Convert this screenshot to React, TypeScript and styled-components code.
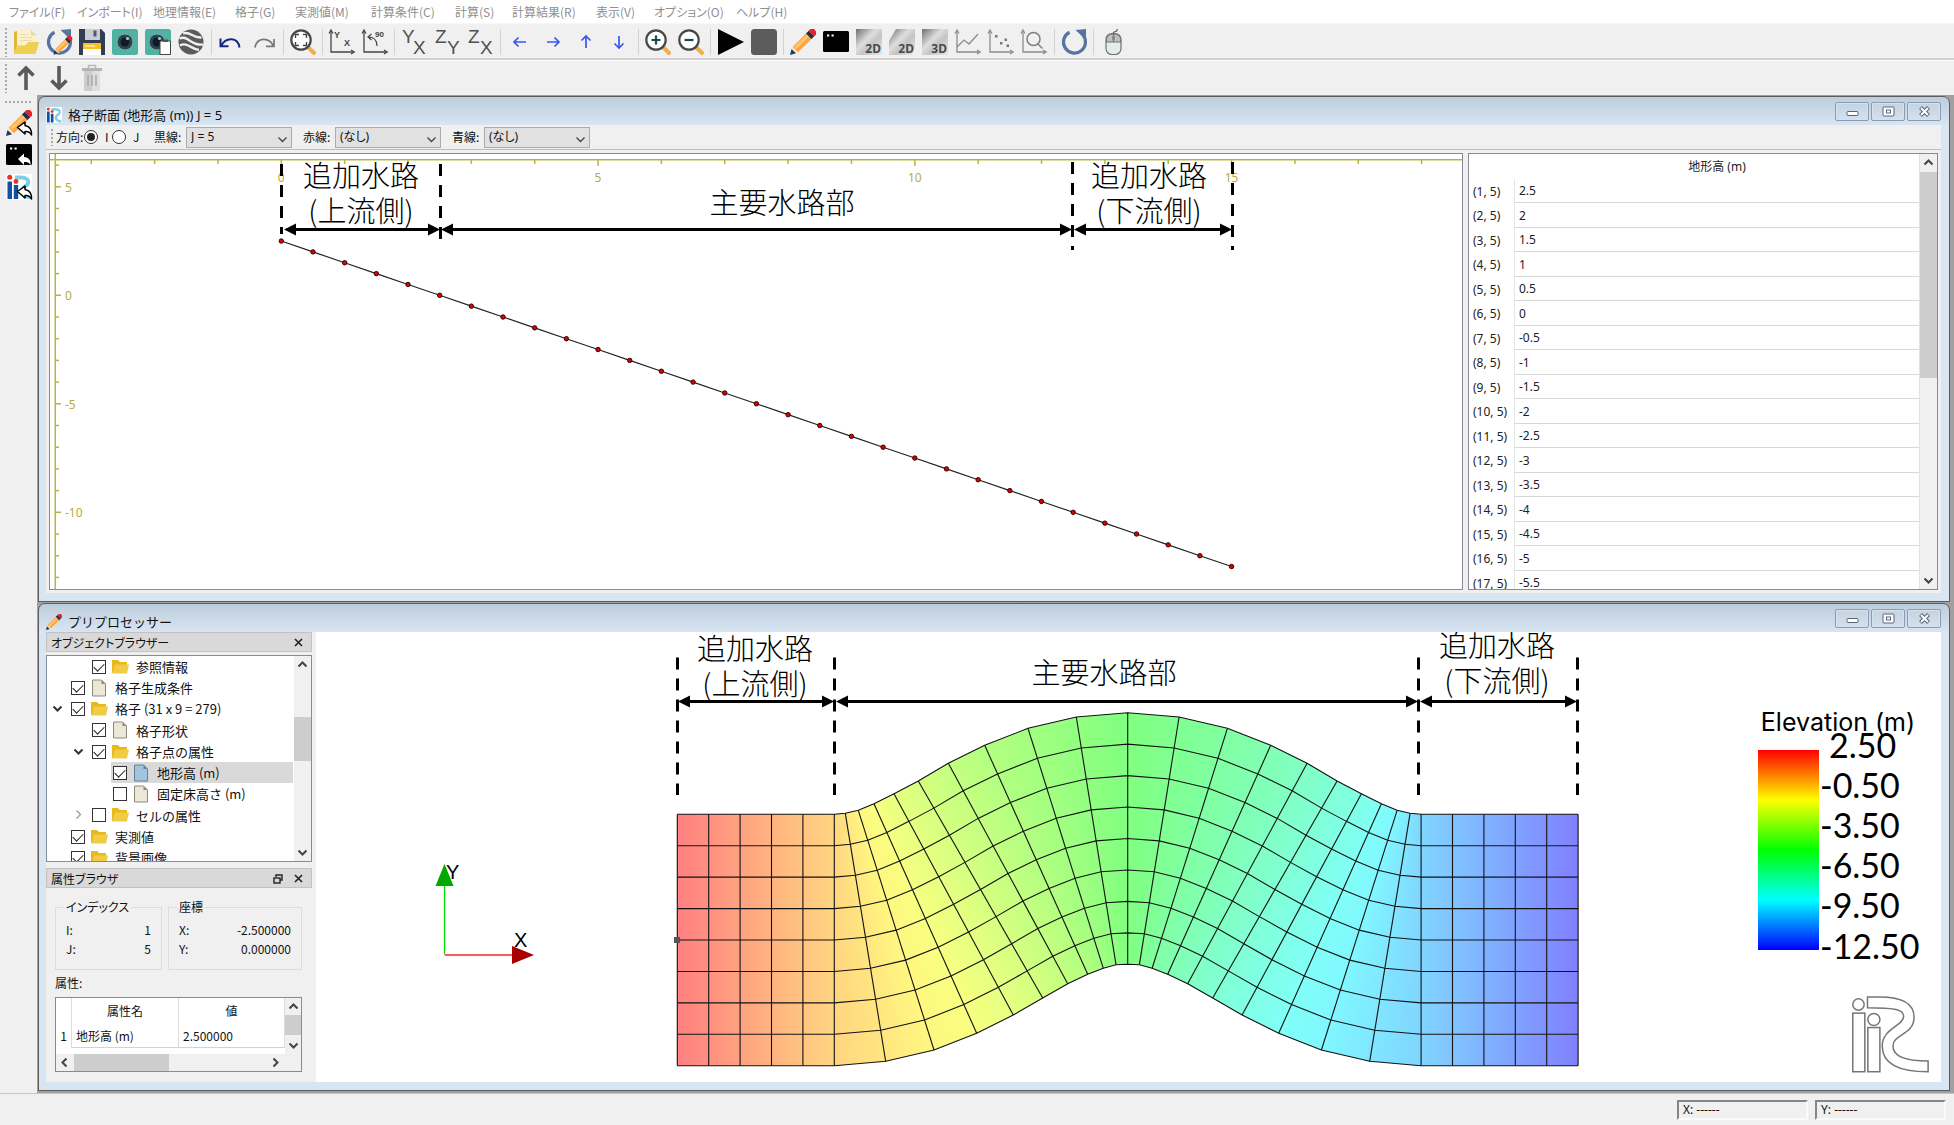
import React, { useState } from "react";
import styled, { createGlobalStyle, css } from "styled-components";

const UI = `"Noto Sans", "Noto Sans CJK JP", sans-serif`;
const JP = `"Noto Sans CJK JP", sans-serif`;

const GlobalStyle = createGlobalStyle`
  * { box-sizing: border-box; }
  html, body { margin: 0; padding: 0; }
  body { background: #f0f0f0; color: #111; font: 12px/18px ${UI}; font-feature-settings: "palt"; }
  button, input, select { font: inherit; font-feature-settings: inherit; color: inherit; margin: 0; }
  button { border: 0; padding: 0; background: none; }
  svg { display: block; overflow: visible; }
`;

const Shell = styled.div`
  height: 100vh;
  display: flex;
  flex-direction: column;
  overflow: hidden;
`;

/* ---------- menu and tool bars ---------- */

const MenuBar = styled.nav`
  height: 24px;
  flex: none;
  display: grid;
  grid-template-columns: 68px 76px 82px 60px 76px 84px 57px 84px 58px 82px auto;
  justify-content: start;
  justify-items: start;
  align-items: center;
  padding-left: 9px;
  background: #fff;
  border-bottom: 1px solid #f7f7f7;
`;

const MenuItem = styled.button`
  color: #8f8f8f;
  line-height: 24px;
  font-family: ${JP};
  white-space: nowrap;
`;

const ToolBar = styled.div<{ $ruled?: boolean }>`
  flex: none;
  display: flex;
  align-items: center;
  gap: 5px;
  padding-left: 4px;
  height: ${(p) => (p.$ruled ? 37 : 34)}px;
  background: #f0f0f0;
  ${(p) =>
    p.$ruled &&
    css`
      border-bottom: 1px solid #fff;
      box-shadow: inset 0 -2px 0 #d0d0d0;
      padding-top: 1px;
      padding-bottom: 1px;
    `}
`;

const Grip = styled.span<{ $wide?: boolean; $short?: boolean }>`
  flex: none;
  width: ${(p) => (p.$wide ? 29 : 4)}px;
  height: ${(p) => (p.$wide ? 4 : p.$short ? 18 : 30)}px;
  background: radial-gradient(circle at 2px 2px, #a8a8a8 1px, transparent 1px) 0 0 / 4px 4px;
`;

const ToolRow = styled.div`
  width: 1113px;
  display: flex;
  align-items: center;
  justify-content: space-between;
`;

const ToolGroup = styled.div`
  display: flex;
  gap: 7px;
`;

const ToolButton = styled.button`
  width: 26px;
  height: 26px;
  flex: none;
`;

const Divider = styled.span`
  width: 1px;
  height: 26px;
  margin: 0 -1px;
  background: #d2d2d2;
`;

const Body = styled.div`
  flex: 1;
  min-height: 0;
  display: flex;
`;

const SideBar = styled.aside`
  width: 37px;
  flex: none;
  display: flex;
  flex-direction: column;
  align-items: center;
  gap: 6px;
  padding-top: 5px;
`;

/* ---------- sub windows ---------- */

const Workspace = styled.main`
  flex: 1;
  min-width: 0;
  display: grid;
  grid-template-rows: minmax(0, 506fr) minmax(0, 488fr);
  gap: 1px;
  padding: 1px 4px 2px 1px;
  background: #a0a0a0;
`;

const SubWindow = styled.section`
  min-width: 0;
  display: flex;
  flex-direction: column;
  padding: 0 8px 8px 7px;
  border: 1px solid #5c5c5c;
  border-radius: 7px 7px 0 0;
  background: linear-gradient(#becddb, #d8e5f2 28px);
`;

const TitleBar = styled.header`
  height: 28px;
  flex: none;
  display: flex;
  align-items: center;
  gap: 6px;
  padding-top: 7px;
`;

const Title = styled.h2`
  flex: 1;
  margin: 0;
  font: 400 13px/20px ${UI};
`;

const CaptionButtons = styled.div`
  display: flex;
  align-self: flex-start;
  gap: 2px;
  margin-top: -2px;
`;

const CaptionButton = styled.button`
  width: 34px;
  height: 19px;
  display: grid;
  place-items: center;
  border: 1px solid #8c9ab5;
  border-radius: 2px;
  background: linear-gradient(#c5d3e1, #d3e0ed);
  box-shadow: inset 0 0 0 1px #d6e2ee;
`;

const Client = styled.div`
  flex: 1;
  min-height: 0;
  display: flex;
  flex-direction: column;
  background: #f0f0f0;
`;

const OptionBar = styled.div`
  height: 25px;
  flex: none;
  display: flex;
  align-items: center;
  padding-left: 4px;
  border-bottom: 1px solid #bdbdbd;
  font-family: ${JP};
`;

const OptionLabel = styled.label<{ $lead?: boolean }>`
  width: ${(p) => (p.$lead ? 28 : 32)}px;
  margin-left: ${(p) => (p.$lead ? 2 : 11)}px;
  white-space: nowrap;
`;

const RadioSet = styled.div`
  display: flex;
  padding-right: 3px;
`;

const RadioLabel = styled.label`
  display: flex;
  align-items: center;
  gap: 7px;
  width: 28px;
`;

const Radio = styled.input`
  appearance: none;
  flex: none;
  width: 14px;
  height: 14px;
  display: grid;
  place-items: center;
  border: 1px solid #333;
  border-radius: 50%;
  background: #fff;
  &:checked::after {
    content: "";
    width: 8px;
    height: 8px;
    border-radius: 50%;
    background: #222;
  }
`;

const SelectBox = styled.div`
  position: relative;
  width: 106px;
  svg {
    position: absolute;
    right: 5px;
    top: 8px;
    pointer-events: none;
  }
`;

const Select = styled.select`
  appearance: none;
  display: block;
  width: 100%;
  height: 21px;
  padding: 0 4px;
  border: 1px solid #adadad;
  border-radius: 0;
  background: #e1e1e1;
  font-family: ${UI};
`;

const Splitter = styled.div`
  flex: 1;
  min-height: 0;
  display: grid;
  grid-template-columns: minmax(0, 1fr) 470px;
  gap: 5px;
  padding: 3px;
`;

const Sunken = styled.div`
  display: flex;
  min-width: 0;
  min-height: 0;
  overflow: hidden;
  border: 1px solid #868b95;
  background: #fff;
`;

const Drawing = styled.svg`
  width: 100%;
  height: 100%;
  overflow: hidden;
`;

/* ---------- scroll bars ---------- */

const Track = styled.div<{ $horizontal?: boolean }>`
  flex: none;
  display: flex;
  flex-direction: ${(p) => (p.$horizontal ? "row" : "column")};
  ${(p) => (p.$horizontal ? "height: 17px; padding-right: 17px;" : "width: 17px;")}
  background: #f0f0f0;
`;

const TrackButton = styled.button`
  flex: none;
  width: 17px;
  height: 17px;
  display: grid;
  place-items: center;
`;

const TrackRun = styled.div<{ $before: number; $horizontal?: boolean }>`
  flex: 1;
  display: flex;
  flex-direction: ${(p) => (p.$horizontal ? "row" : "column")};
  ${(p) => (p.$horizontal ? "padding-left" : "padding-top")}: ${(p) => p.$before}px;
`;

const Thumb = styled.div<{ $size: number; $horizontal?: boolean }>`
  ${(p) => (p.$horizontal ? "width" : "height")}: ${(p) => p.$size}px;
  background: #cdcdcd;
`;

/* ---------- section table ---------- */

const TablePane = styled.div`
  flex: 1;
  min-width: 0;
  overflow: hidden;
  border-right: 1px solid #e2e2e2;
`;

const SectionTable = styled.table`
  width: 100%;
  border-collapse: separate;
  border-spacing: 0;
  color: #222;
  th, td { padding: 1px 0 0; font-weight: 400; text-align: left; }
  thead th { height: 25px; text-align: center; font-size: 12px; }
  tbody th { width: 46px; padding-left: 4px; border-right: 1px solid #e6e6e6; }
  tbody td { padding-left: 4px; border-bottom: 1px solid #d9d9d9; }
  tbody tr { height: 24px; }
  tbody tr:nth-child(even) { height: 25px; }
`;

/* ---------- docks ---------- */

const PreBody = styled.div`
  flex: 1;
  min-height: 0;
  display: grid;
  grid-template-columns: 266px minmax(0, 1fr);
  gap: 4px;
  background: #f0f0f0;
`;

const Docks = styled.div`
  display: flex;
  flex-direction: column;
  min-height: 0;
`;

const DockTitle = styled.div`
  height: 20px;
  flex: none;
  display: flex;
  align-items: center;
  gap: 11px;
  padding: 1px 8px 0 4px;
  border: 1px solid #c2c2c2;
  background: #d9d9d9;
  font-family: ${JP};
  span { flex: 1; }
`;

const TreeFrame = styled(Sunken)`
  flex: 1;
  margin: 3px 0 6px;
`;

const Tree = styled.ul`
  flex: 1;
  margin: 0;
  padding: 0 1px 0 0;
  list-style: none;
  overflow: hidden;
  font: 13px/21px ${JP};
`;

const TreeRow = styled.li<{ $level: number }>`
  height: 21px;
  display: flex;
  padding-left: ${(p) => p.$level * 21 - 17}px;
  white-space: nowrap;
  &:nth-child(4n) { height: 22px; }
`;

const Expander = styled.button`
  width: 12px;
  height: 21px;
  margin-right: 6px;
  flex: none;
  display: grid;
  place-items: center;
`;

const TreeCell = styled.label<{ $selected?: boolean }>`
  flex: 1;
  display: flex;
  align-items: center;
  padding-left: 2px;
  background: ${(p) => (p.$selected ? "#d9d9d9" : "transparent")};
  svg { margin: 0 7px 0 6px; flex: none; }
`;

const Check = styled.input`
  appearance: none;
  flex: none;
  width: 14px;
  height: 14px;
  border: 1px solid #333;
  background: #fff;
  &:checked::after {
    content: "";
    display: block;
    width: 9px;
    height: 5px;
    margin: 2px 0 0 1px;
    border: solid #222;
    border-width: 0 0 1px 1px;
    transform: rotate(-45deg);
  }
`;

const Properties = styled.div`
  flex: none;
  padding: 10px 10px 10px 9px;
  font-family: ${JP};
`;

const GroupRow = styled.div`
  display: grid;
  grid-template-columns: 107px 134px;
  gap: 6px;
`;

const Group = styled.fieldset`
  margin: 0;
  min-width: 0;
  padding: 4px 10px 11px;
  border: 1px solid #dcdcdc;
`;

const Legend = styled.legend`
  margin-left: -2px;
  padding: 0 2px;
  line-height: 18px;
`;

const Readout = styled.div`
  display: flex;
  justify-content: space-between;
  line-height: 19px;
`;

const Caption = styled.div`
  margin: 4px 0 5px;
  line-height: 18px;
`;

const PropFrame = styled(Sunken)`
  height: 75px;
  flex-direction: column;
`;

const PropTop = styled.div`
  flex: 1;
  min-height: 0;
  display: flex;
`;

const PropTable = styled.table`
  width: 229px;
  align-self: flex-start;
  border-collapse: separate;
  border-spacing: 0;
  table-layout: fixed;
  th, td { padding: 0; font-weight: 400; border-right: 1px solid #dcdcdc; }
  thead th { height: 26px; text-align: center; }
  tbody tr { height: 24px; }
  tbody th { text-align: center; }
  tbody td { padding-left: 4px; border-bottom: 1px solid #d2d2d2; }
`;

const Col = styled.col<{ $w: number }>`
  width: ${(p) => p.$w}px;
`;

const View = styled.div`
  background: #fff;
  min-width: 0;
  min-height: 0;
`;

/* ---------- status bar ---------- */

const StatusBar = styled.footer`
  height: 32px;
  flex: none;
  display: flex;
  align-items: center;
  justify-content: flex-end;
  gap: 7px;
  padding-right: 8px;
  border-top: 1px solid #c6c6c6;
`;

const StatusField = styled.output`
  width: 131px;
  height: 20px;
  padding-left: 4px;
  border: 2px solid;
  border-color: #868686 #fafafa #fafafa #868686;
  line-height: 16px;
`;

/* ---------- icons ---------- */

const Icon = ({ children, size = 26 }: { children: React.ReactNode; size?: number }) => (
  <svg width={size} height={size} viewBox="0 0 26 26" fill="none">
    {children}
  </svg>
);

const PencilShape = () => (
  <>
    <path d="M0 26l1.500-6L6 24.300z" fill="#1f3a5c" />
    <path d="M1.800 19l4.700 5L8 22.500 3.300 17.500z" fill="#fde3bd" />
    <path d="M2.800 17.700L16.500 4l5.500 5.500L8 23.200z" fill="#ffa63f" />
    <path d="M4.500 17.500L17.500 5l2 2L6.500 20z" fill="#ffc46e" />
    <path d="M16 4.500l2.700-2.700 5.500 5.500-2.700 2.700z" fill="#1b2f4f" />
    <path d="M18.500 2L20.500 0h3.500l2 2.200v3.300L24 7.500z" fill="#e0232e" />
  </>
);

const ReplyShape = () => (
  <path
    d="M11.500 17.500l7.500-5.500v3.500c4.500 1 7 4.500 6.500 9.500-1.500-3-3.500-4-6.500-3.500v2.500z"
    fill="#fff"
    stroke="#000"
    strokeWidth="1.500"
    strokeLinejoin="round"
  />
);

const RefreshShape = () => (
  <>
    <path d="M8.500 3.200A11 11 0 1 0 21.500 5.500" stroke="#56749f" strokeWidth="3.200" />
    <path d="M14.500 1L25 0v11z" fill="#56749f" />
  </>
);

const IricShape = () => (
  <>
    <rect width="26" height="26" fill="#fff" />
    <path d="M9 3.500h6c5 0 8 2 7 6-1 3-6 3.500-6 7.500 0 4 4 6 9 6.500" stroke="#7fd0e6" strokeWidth="4" />
    <path d="M1.500 7.500h4.500V25H1.500zM7.800 11h4.400v14H7.800z" fill="#1450a0" />
    <circle cx="3.700" cy="3.200" r="2.500" fill="#f0301e" />
    <circle cx="10" cy="7.500" r="2.400" fill="#f0301e" />
  </>
);

const ConsoleShape = () => (
  <>
    <rect x="0" y="2" width="26" height="21" rx="1.500" fill="#000" />
    <path d="M4 5.500h2.200v2H4zM8.500 5.500h2.200v2H8.500z" fill="#fff" />
  </>
);

const Axes = ({ color = "#444" }: { color?: string }) => (
  <>
    <path d="M2 1.500V23h22" stroke={color} strokeWidth="1.300" />
    <path d="M0 4.500L2 1l2 3.500M22 21l3.300 2L22 25" stroke={color} strokeWidth="1.200" />
  </>
);

const Lens = ({ children }: { children: React.ReactNode }) => (
  <>
    <path d="M18 18l6 6" stroke="#f2ad4e" strokeWidth="4" strokeLinecap="round" />
    <circle cx="11" cy="11" r="9.700" fill="#fff" stroke="#474747" strokeWidth="2.200" />
    {children}
  </>
);

const Glyph = ({ x, y, children }: { x: number; y: number; children: string }) => (
  <text x={x} y={y} fontFamily="Liberation Sans, sans-serif" fontSize="19" fill="#505050">
    {children}
  </text>
);

const Dim = ({ label, d }: { label: string; d: string }) => (
  <>
    <defs>
      <linearGradient id="metal" x1="0" y1="0" x2="1" y2="1">
        <stop offset="0" stopColor="#6e6e6e" />
        <stop offset=".4" stopColor="#dedede" />
        <stop offset=".6" stopColor="#c4c4c4" />
        <stop offset="1" stopColor="#e8e8e8" />
      </linearGradient>
    </defs>
    <path d={d} fill="url(#metal)" />
    <text x="25" y="24" textAnchor="end" fontFamily="Noto Sans, sans-serif" fontWeight="700" fontSize="12" fill="#4a4a4a">
      {label}
    </text>
  </>
);

const CameraShape = ({ x = 13 }: { x?: number }) => (
  <>
    <rect width="26" height="26" rx="2.500" fill="#4fb3a3" />
    <circle cx={x} cy="13" r="8" fill="#2c4450" stroke="#7fa9ab" strokeWidth="1" />
    <circle cx={x} cy="13" r="4.500" fill="#0f1c26" />
    <circle cx={x + 2.500} cy="9.500" r="1.600" fill="#a8c6cf" />
  </>
);

const Arrow = ({ turn, color = "#3a56f0" }: { turn: number; color?: string }) => (
  <g transform={`rotate(${turn} 13 13)`}>
    <path d="M19 13H7.500M11.500 8.500L7 13l4.500 4.500" stroke={color} strokeWidth="1.700" />
  </g>
);

const tools: Record<string, React.ReactNode> = {
  open: (
    <>
      <path d="M3.500 1H18l5.500 5.500V20h-20z" fill="#fbf1cd" />
      <path d="M18 1v5.500h5.500z" fill="#e8d9a4" />
      <path d="M7 5.500h8M7 8.500h12M7 11.500h12" stroke="#eadcae" />
      <path d="M1 25V3l3-1v15z" fill="#e0b63a" />
      <path d="M1 25L4 16.500h8L15.500 13H26l-3.500 12z" fill="#f0d050" />
    </>
  ),
  reload: (
    <>
      <RefreshShape />
      <g transform="translate(7.500 7) scale(.72)">
        <PencilShape />
      </g>
    </>
  ),
  save: (
    <>
      <path d="M0 0h22l4 4v22H0z" fill="#323d55" />
      <path d="M6 0h15v11H6z" fill="#c9cdd3" />
      <path d="M14.500 1.500h3v6h-3z" fill="#4e586c" />
      <path d="M4 14h18v12H4z" fill="#fff" />
      <path d="M4 14h18v6H4z" fill="#f8c01c" />
      <path d="M6 17h10" stroke="#fff" />
    </>
  ),
  snapshot: <CameraShape />,
  copySnapshot: (
    <>
      <CameraShape x={12} />
      <path d="M15 12h10.500v13.500H15z" fill="#fff" stroke="#444" />
      <path d="M18 10.500h5v2.500h-5z" fill="#555" />
    </>
  ),
  earth: (
    <>
      <circle cx="13" cy="13" r="12.500" fill="#5b5b5b" />
      <path d="M5 4.500c7-3 10 5 18.500 4M1.500 9.500c8-4 12 8 23.500 6M2 16.500c7-4 12 4 19 4.500" stroke="#f0f0f0" strokeWidth="2.400" />
    </>
  ),
  undo: (
    <path d="M21.500 18.500C20 8 8 7.500 3 17M2.500 9.500V17.300h8" stroke="#14277f" strokeWidth="2" />
  ),
  redo: (
    <path d="M4 18.500C6 8 18 8 22.500 17M23 10v7.300h-8" stroke="#777" strokeWidth="1.700" />
  ),
  fit: (
    <Lens>
      <path d="M5.500 9V5.500H9M13 5.500h3.500V9M16.500 13v3.500H13M9 16.500H5.500V13" stroke="#444" strokeWidth="1.400" />
    </Lens>
  ),
  axes: (
    <>
      <Axes />
      <text x="5" y="9" fontFamily="Liberation Sans, sans-serif" fontWeight="700" fontSize="9" fill="#444">Y</text>
      <text x="15" y="17" fontFamily="Liberation Sans, sans-serif" fontWeight="700" fontSize="9" fill="#444">X</text>
    </>
  ),
  rotate: (
    <>
      <Axes />
      <path d="M6 8c6 0 9 3 9 9M9.500 5L6 8l3.500 3" stroke="#444" strokeWidth="1.200" />
      <text x="13" y="8" fontFamily="Liberation Sans, sans-serif" fontWeight="700" fontSize="8" fill="#444">90</text>
    </>
  ),
  yx: (<><Glyph x={1} y={14}>Y</Glyph><Glyph x={12} y={25}>X</Glyph></>),
  zy: (<><Glyph x={0} y={14}>Z</Glyph><Glyph x={12} y={25}>Y</Glyph></>),
  zx: (<><Glyph x={0} y={14}>Z</Glyph><Glyph x={12} y={25}>X</Glyph></>),
  left: <Arrow turn={0} />,
  right: <Arrow turn={180} />,
  up: <Arrow turn={90} />,
  down: <Arrow turn={270} />,
  zoomIn: (<Lens><path d="M6.500 11h9M11 6.500v9" stroke="#174a4e" strokeWidth="2.200" /></Lens>),
  zoomOut: (<Lens><path d="M6.500 11h9" stroke="#174a4e" strokeWidth="2.200" /></Lens>),
  play: <path d="M0 0l26 13L0 26z" fill="#000" />,
  stop: <rect width="26" height="26" rx="3.500" fill="#5c5c5c" />,
  pencil: <PencilShape />,
  console: <ConsoleShape />,
  plan: <Dim label="2D" d="M0 0h26v26H0z" />,
  bird: <Dim label="2D" d="M7 0h19v20l-3 6H0V12z" />,
  cube: <Dim label="3D" d="M0 0h26v26H0z" />,
  chart: (<><Axes color="#8c8c8c" /><path d="M2 18l7-7 5 4 9-10" stroke="#8c8c8c" strokeWidth="1.300" /></>),
  scatter: (
    <>
      <Axes color="#8c8c8c" />
      <path d="M7 6h2.500v2.500H7zM12 13h2.500v2.500H12zM16.500 9.500H19V12h-2.500zM18.500 15.500H21V18h-2.500z" fill="#777" />
    </>
  ),
  inspect: (
    <>
      <Axes color="#8c8c8c" />
      <circle cx="12.500" cy="10" r="6.500" stroke="#808080" strokeWidth="1.500" />
      <path d="M17 15l4.500 4.500" stroke="#808080" strokeWidth="1.500" />
    </>
  ),
  refresh: <RefreshShape />,
  mouse: (
    <>
      <path d="M13 5c0-4 5-1 4-5" stroke="#555" strokeWidth="1.200" />
      <rect x="6" y="4.500" width="15" height="21" rx="6" fill="#e4ecee" stroke="#707070" strokeWidth="1.200" />
      <path d="M6.500 13v-2.500c0-3 3-5.500 7-5.500s7 2.500 7 5.500V13z" fill="#c0c0c0" stroke="#707070" />
      <path d="M13.500 5v8" stroke="#707070" />
      <rect x="12" y="6.500" width="3" height="5" rx="1.500" fill="#888" />
    </>
  ),
  moveUp: <path d="M13 25V3M5.500 10.500L13 3l7.500 7.500" stroke="#5a5a5a" strokeWidth="3.600" />,
  moveDown: <path d="M13 1v22M5.500 15.500L13 23l7.500-7.500" stroke="#5a5a5a" strokeWidth="3.600" />,
  trash: (
    <>
      <path d="M9.500 3V.5h7V3" stroke="#b9b9b9" strokeWidth="1.500" />
      <path d="M3 3h20v3H3z" fill="#b4b4b4" />
      <path d="M5 6h8v20H5z" fill="#cdcdcd" />
      <path d="M13 6h8v20h-8z" fill="#dedede" />
      <path d="M9 10v11M13 10v11M17 10v11" stroke="#a9a9a9" strokeWidth="1.500" />
    </>
  ),
  sidePencil: (<><PencilShape /><ReplyShape /></>),
  sideConsole: (
    <>
      <ConsoleShape />
      <path d="M12 17l6-5.500v3.500c5 .5 7 3.500 6.500 8-1.500-2.500-3-3-6.500-3v3z" fill="#fff" />
    </>
  ),
  sideIric: (<><IricShape /><ReplyShape /></>),
};

const mainTools: [string, string][][] = [
  [["open", "開く"], ["reload", "再読込"], ["save", "保存"], ["snapshot", "スナップショット"], ["copySnapshot", "コピー"], ["earth", "Google Earth"]],
  [["undo", "元に戻す"], ["redo", "やり直し"]],
  [["fit", "全体表示"]],
  [["axes", "回転リセット"], ["rotate", "90度回転"]],
  [["yx", "XY平面"], ["zy", "YZ平面"], ["zx", "XZ平面"]],
  [["left", "左"], ["right", "右"], ["up", "上"], ["down", "下"]],
  [["zoomIn", "拡大"], ["zoomOut", "縮小"]],
  [["play", "実行"], ["stop", "停止"]],
  [["pencil", "プリプロセッサー"], ["console", "コンソール"], ["plan", "2D"], ["bird", "鳥瞰図"], ["cube", "3D"], ["chart", "グラフ"], ["scatter", "散布図"], ["inspect", "検証"]],
  [["refresh", "更新"]],
  [["mouse", "マウス"]],
];

const Tool = ({ name, label }: { name: string; label: string }) => (
  <ToolButton type="button" aria-label={label}>
    <Icon>{tools[name]}</Icon>
  </ToolButton>
);

const Chevron = ({ dir = "down", color = "#444", w = 2 }: { dir?: "down" | "up" | "left" | "right"; color?: string; w?: number }) => {
  const turn = { down: 0, left: 90, up: 180, right: 270 }[dir];
  return (
    <svg width="9" height="9" viewBox="0 0 9 9" fill="none">
      <path d="M.5 2.500l4 4 4-4" stroke={color} strokeWidth={w} transform={`rotate(${turn} 4.500 4.500)`} />
    </svg>
  );
};

const CrossIcon = () => (
  <svg width="9" height="9" viewBox="0 0 9 9">
    <path d="M1 1l7 7M8 1L1 8" stroke="#222" strokeWidth="1.600" />
  </svg>
);

const FloatIcon = () => (
  <svg width="10" height="10" viewBox="0 0 10 10" fill="none">
    <path d="M3 3V1h6v5H7" stroke="#222" strokeWidth="1.400" />
    <rect x="1" y="4" width="6" height="5" stroke="#222" strokeWidth="1.400" />
  </svg>
);

const FolderIcon = () => (
  <svg width="17" height="16" viewBox="0 0 17 16">
    <path d="M0 14V1h6l2 2h7v4z" fill="#e9b91c" />
    <path d="M0 14.500L3 5.500h14l-2 9z" fill="#f0cc45" />
    <path d="M0 14.500V1h2v9z" fill="#e9b91c" />
  </svg>
);

const PageIcon = ({ blue }: { blue?: boolean }) => (
  <svg width="17" height="18" viewBox="0 0 17 18">
    <path d="M1.500 1h9l4 4v12h-13z" fill={blue ? "#a3c5dc" : "#ece8d5"} stroke={blue ? "#5f819b" : "#8d8a7c"} />
    <path d="M10.500 1v4h4z" fill={blue ? "#5f819b" : "#8d8a7c"} />
  </svg>
);

const ScrollBar = ({ before, size, horizontal }: { before: number; size: number; horizontal?: boolean }) => (
  <Track $horizontal={horizontal}>
    <TrackButton type="button" aria-label={horizontal ? "左へ" : "上へ"}>
      <Chevron dir={horizontal ? "left" : "up"} />
    </TrackButton>
    <TrackRun $before={before} $horizontal={horizontal}>
      <Thumb $size={size} $horizontal={horizontal} />
    </TrackRun>
    <TrackButton type="button" aria-label={horizontal ? "右へ" : "下へ"}>
      <Chevron dir={horizontal ? "right" : "down"} />
    </TrackButton>
  </Track>
);

const Captions = () => (
  <CaptionButtons>
    <CaptionButton type="button" aria-label="最小化">
      <svg width="13" height="11" viewBox="0 0 13 11">
        <rect x="1" y="5.500" width="11" height="4" rx="1" fill="#fff" stroke="#5a6478" />
      </svg>
    </CaptionButton>
    <CaptionButton type="button" aria-label="最大化">
      <svg width="13" height="11" viewBox="0 0 13 11" fill="#fff" stroke="#5a6478">
        <rect x="1" y="1" width="11" height="9" rx="1" />
        <rect x="4.500" y="4" width="4" height="3" />
      </svg>
    </CaptionButton>
    <CaptionButton type="button" aria-label="閉じる">
      <svg width="13" height="11" viewBox="0 0 13 11" fill="none">
        <path d="M2.500 1.500l8 8M10.500 1.500l-8 8" stroke="#5a6478" strokeWidth="4" />
        <path d="M3 2l7 7M10 2L3 9" stroke="#fff" strokeWidth="2" />
      </svg>
    </CaptionButton>
  </CaptionButtons>
);

/* ---------- annotation marks shared by both drawings ---------- */

const Guide = ({ x, y1, y2 }: { x: number; y1: number; y2: number }) => (
  <path d={`M${x} ${y1}V${y2}`} stroke="#000" strokeWidth="3" strokeDasharray="12 9" />
);

const Span = ({ x1, x2, y }: { x1: number; x2: number; y: number }) => (
  <g>
    <path d={`M${x1 + 9} ${y}H${x2 - 9}`} stroke="#000" strokeWidth="3" />
    <path d={`M${x1} ${y}l12 -6v12zM${x2} ${y}l-12 -6v12z`} fill="#000" />
  </g>
);

const Note = ({ x, y, children }: { x: number; y: number; children: string }) => (
  <text x={x} y={y} textAnchor="middle" fontFamily="Noto Sans CJK JP, sans-serif" fontWeight="300" fontSize="29" fill="#000">
    {children}
  </text>
);

/* ---------- section plot ---------- */

const plotX = (v: number) => 281.3 + v * 63.35;
const plotY = (v: number) => 295.3 - v * 21.7;
const range = (a: number, b: number) => Array.from({ length: b - a + 1 }, (_, i) => a + i);

const SectionPlot = () => {
  const nodes = range(0, 30).map((i) => [plotX(i * 0.5), plotY(2.5 - i * 0.5)]);
  return (
    <Drawing viewBox="50 154 1412 435" preserveAspectRatio="xMinYMin meet" role="img" aria-label="格子断面">
      <g stroke="#b4b44a" fill="none">
        <path d="M50 160.500H1462M54.500 154V589" stroke="#dedea4" />
        <path d="M50 159.500H1462M55.500 154V589" />
        {range(-3, 18).map((v) => (
          <path key={v} d={`M${plotX(v)} 160V${v % 5 === 0 ? 166 : 164}`} strokeWidth="1.500" />
        ))}
        {range(-13, 6).map((v) => (
          <path key={v} d={`M56 ${plotY(v)}H${v % 5 === 0 ? 61 : 59}`} strokeWidth="1.500" />
        ))}
      </g>
      <g fontFamily="Noto Sans, sans-serif" fontSize="12" fill="#b5ad3c">
        {[0, 5, 10, 15].map((v) => (
          <text key={v} x={plotX(v)} y="182" textAnchor="middle">{v}</text>
        ))}
        {[5, 0, -5, -10].map((v) => (
          <text key={v} x="65" y={plotY(v) + 5}>{v}</text>
        ))}
      </g>
      <polyline points={nodes.map((p) => p.join(",")).join(" ")} fill="none" stroke="#222" strokeWidth="1.200" />
      {nodes.map(([x, y]) => (
        <circle key={x} cx={x} cy={y} r="2.200" fill="#e00000" stroke="#300" />
      ))}
      <Guide x={281.5} y1={164} y2={234} />
      <Guide x={440.5} y1={164} y2={240} />
      <Guide x={1072.5} y1={162} y2={250} />
      <Guide x={1232.5} y1={162} y2={250} />
      <Span x1={284} x2={440} y={229.5} />
      <Span x1={441} x2={1072} y={229.5} />
      <Span x1={1074} x2={1232} y={229.5} />
      <Note x={361} y={187}>追加水路</Note>
      <Note x={361} y={222}>(上流側)</Note>
      <Note x={782} y={214}>主要水路部</Note>
      <Note x={1149} y={187}>追加水路</Note>
      <Note x={1149} y={222}>(下流側)</Note>
    </Drawing>
  );
};

/* ---------- mesh ---------- */

type Pt = [number, number];
const MID = 1127.7;
const bendTop: Pt[] = [
  [834.3, 814.3], [845.3, 813.3], [858.3, 810.3], [874, 803.7], [894, 793.7], [918.3, 781],
  [948.3, 763.3], [984.7, 745.3], [1028, 728.3], [1076.3, 717], [MID, 712.7],
];
const bendBottom: Pt[] = [
  [834.3, 1065.7], [885.7, 1061.3], [934, 1050], [976.7, 1033.3], [1013.3, 1015], [1042.7, 998],
  [1067.7, 983.7], [1087.7, 974.3], [1103.3, 968.3], [1116, 964.7], [MID, 964.3],
];
const mirror = (p: Pt[]): Pt[] => p.slice(0, -1).reverse().map(([x, y]) => [2 * MID - x, y]);
const reach = (y: number, start: number): Pt[] => range(0, 4).map((i) => [start + i * 31.4, y]);
const edge = (bend: Pt[], y: number): Pt[] => [
  ...reach(y, 677.3), ...bend, ...mirror(bend), ...reach(y, 1452.5),
];
const topEdge = edge(bendTop, 814.3);
const bottomEdge = edge(bendBottom, 1065.7);
const rows = range(0, 8).map((j) =>
  topEdge.map(([x, y], i): Pt => [x + ((bottomEdge[i][0] - x) * j) / 8, y + ((bottomEdge[i][1] - y) * j) / 8]),
);
const stops = [[255, 128, 128], [255, 255, 128], [128, 255, 128], [128, 255, 255], [128, 128, 255]];
const tint = (t: number) => {
  const k = Math.min(3, Math.floor(t * 4));
  const f = t * 4 - k;
  return `rgb(${stops[k].map((c, n) => Math.round(c + (stops[k + 1][n] - c) * f)).join(",")})`;
};
const mid = (a: Pt, b: Pt): Pt => [(a[0] + b[0]) / 2, (a[1] + b[1]) / 2];

const Mesh = () => (
  <g>
    {rows.slice(0, -1).map((row, j) =>
      row.slice(0, -1).map((a, i) => {
        const b = row[i + 1];
        const c = rows[j + 1][i + 1];
        const d = rows[j + 1][i];
        const from = mid(a, d);
        const to = mid(b, c);
        const id = `cell-${i}-${j}`;
        return (
          <g key={id}>
            <linearGradient id={id} gradientUnits="userSpaceOnUse" x1={from[0]} y1={from[1]} x2={to[0]} y2={to[1]}>
              <stop offset="0" stopColor={tint(i / 30)} />
              <stop offset="1" stopColor={tint((i + 1) / 30)} />
            </linearGradient>
            <polygon points={[a, b, c, d].join(" ")} fill={`url(#${id})`} />
          </g>
        );
      }),
    )}
    <g fill="none" stroke="#111" strokeWidth="1.100">
      {rows.map((row, j) => (
        <polyline key={j} points={row.join(" ")} />
      ))}
      {topEdge.map((p, i) => (
        <path key={i} d={`M${p}L${bottomEdge[i]}`} />
      ))}
    </g>
    <rect x="674" y="937" width="6" height="6" fill="#555" />
  </g>
);

const legend = ["2.50", "-0.50", "-3.50", "-6.50", "-9.50", "-12.50"];

const MeshView = () => (
  <Drawing viewBox="316 632 1625 450" preserveAspectRatio="xMinYMin meet" role="img" aria-label="格子">
    <Mesh />
    <Guide x={677.5} y1={657.5} y2={795} />
    <Guide x={834.5} y1={657.5} y2={795} />
    <Guide x={1418.5} y1={657.5} y2={795} />
    <Guide x={1577.5} y1={657.5} y2={795} />
    <Span x1={678} x2={834} y={701.5} />
    <Span x1={836} x2={1418} y={701.5} />
    <Span x1={1420} x2={1577} y={701.5} />
    <Note x={755} y={660}>追加水路</Note>
    <Note x={755} y={695}>(上流側)</Note>
    <Note x={1104} y={684}>主要水路部</Note>
    <Note x={1497} y={657}>追加水路</Note>
    <Note x={1497} y={692}>(下流側)</Note>

    <path d="M444.500 954V884" stroke="#00e000" strokeWidth="1.300" />
    <path d="M444.500 955H514" stroke="#ff2020" strokeWidth="1.300" />
    <path d="M444.500 864l9 22h-18z" fill="#00a800" />
    <path d="M534 955l-22-9v18z" fill="#a80000" />
    <text x="446" y="879" fontFamily="Liberation Sans, sans-serif" fontSize="20">Y</text>
    <text x="514" y="947" fontFamily="Liberation Sans, sans-serif" fontSize="20">X</text>

    <defs>
      <linearGradient id="rainbow" x1="0" y1="0" x2="0" y2="1">
        <stop offset="0" stopColor="#f00" />
        <stop offset=".25" stopColor="#ff0" />
        <stop offset=".5" stopColor="#0f0" />
        <stop offset=".75" stopColor="#0ff" />
        <stop offset="1" stopColor="#00f" />
      </linearGradient>
    </defs>
    <rect x="1758" y="750" width="61" height="200" fill="url(#rainbow)" />
    <text x="1838" y="731" fontFamily="Inter, sans-serif" fontSize="25" textAnchor="middle">Elevation (m)</text>
    <g fontFamily="Lato, sans-serif" fontSize="34">
      {legend.map((t, i) => (
        <text key={t} x={i === 0 ? 1829 : 1820} y={757.5 + i * 40.2}>{t}</text>
      ))}
    </g>

    <g transform="translate(1600 600) scale(.3348)" fill="#fff" stroke="#767676" strokeWidth="4.500">
      <circle cx="772" cy="1208" r="17" />
      <rect x="755" y="1234" width="36" height="175" />
      <circle cx="818" cy="1253" r="18" />
      <rect x="800" y="1277" width="36" height="132" />
      <path d="M799 1186H835C902 1186 938 1204 938 1246C938 1300 875 1296 875 1332C875 1366 925 1377 980 1377V1409C896 1409 843 1388 843 1332C843 1280 907 1272 907 1243C907 1222 872 1218 799 1218Z" />
    </g>
  </Drawing>
);

/* ---------- data ---------- */

const menus = [
  "ファイル(F)", "インポート(I)", "地理情報(E)", "格子(G)", "実測値(M)", "計算条件(C)",
  "計算(S)", "計算結果(R)", "表示(V)", "オプション(O)", "ヘルプ(H)",
];

type Node = { text: string; level: number; on: boolean; icon: "folder" | "page" | "blue"; open?: boolean };
const nodes: Node[] = [
  { text: "参照情報", level: 2, on: true, icon: "folder" },
  { text: "格子生成条件", level: 1, on: true, icon: "page" },
  { text: "格子 (31 x 9 = 279)", level: 1, on: true, icon: "folder", open: true },
  { text: "格子形状", level: 2, on: true, icon: "page" },
  { text: "格子点の属性", level: 2, on: true, icon: "folder", open: true },
  { text: "地形高 (m)", level: 3, on: true, icon: "blue" },
  { text: "固定床高さ (m)", level: 3, on: false, icon: "page" },
  { text: "セルの属性", level: 2, on: false, icon: "folder", open: false },
  { text: "実測値", level: 1, on: true, icon: "folder" },
  { text: "背景画像", level: 1, on: true, icon: "folder" },
];

const lines = [
  { id: "black", label: "黒線:", value: "J = 5" },
  { id: "red", label: "赤線:", value: "(なし)" },
  { id: "blue", label: "青線:", value: "(なし)" },
];

export default function App() {
  const [direction, setDirection] = useState("I");
  const [checks, setChecks] = useState(nodes.map((n) => n.on));

  return (
    <>
      <GlobalStyle />
      <Shell>
        <MenuBar>
          {menus.map((m) => (
            <MenuItem key={m} type="button">{m}</MenuItem>
          ))}
        </MenuBar>
        <ToolBar $ruled>
          <Grip />
          <ToolRow>
            {mainTools.map((group, g) => (
              <React.Fragment key={g}>
                {g > 0 && <Divider />}
                {group.map(([name, label]) => (
                  <Tool key={name} name={name} label={label} />
                ))}
              </React.Fragment>
            ))}
          </ToolRow>
        </ToolBar>
        <ToolBar>
          <Grip />
          <ToolGroup>
            <Tool name="moveUp" label="上へ移動" />
            <Tool name="moveDown" label="下へ移動" />
            <Tool name="trash" label="削除" />
          </ToolGroup>
        </ToolBar>

        <Body>
          <SideBar>
            <Grip $wide />
            <Tool name="sidePencil" label="プリプロセッサーへ" />
            <Tool name="sideConsole" label="コンソールへ" />
            <Tool name="sideIric" label="iRIC" />
          </SideBar>

          <Workspace>
            <SubWindow>
              <TitleBar>
                <Icon size={16}><IricShape /></Icon>
                <Title>格子断面 (地形高 (m)) J = 5</Title>
                <Captions />
              </TitleBar>
              <Client>
                <OptionBar>
                  <Grip $short />
                  <OptionLabel as="span" $lead>方向:</OptionLabel>
                  <RadioSet>
                    {["I", "J"].map((d) => (
                      <RadioLabel key={d}>
                        <Radio type="radio" name="direction" checked={direction === d} onChange={() => setDirection(d)} />
                        {d}
                      </RadioLabel>
                    ))}
                  </RadioSet>
                  {lines.map((l) => (
                    <React.Fragment key={l.id}>
                      <OptionLabel htmlFor={l.id}>{l.label}</OptionLabel>
                      <SelectBox>
                        <Select id={l.id} defaultValue={l.value}>
                          <option>{l.value}</option>
                        </Select>
                        <Chevron w={1.3} />
                      </SelectBox>
                    </React.Fragment>
                  ))}
                </OptionBar>
                <Splitter>
                  <Sunken>
                    <SectionPlot />
                  </Sunken>
                  <Sunken>
                    <TablePane>
                      <SectionTable>
                        <thead>
                          <tr>
                            <th />
                            <th scope="col">地形高 (m)</th>
                          </tr>
                        </thead>
                        <tbody>
                          {range(1, 17).map((i) => (
                            <tr key={i}>
                              <th scope="row">({i}, 5)</th>
                              <td>{3 - i * 0.5}</td>
                            </tr>
                          ))}
                        </tbody>
                      </SectionTable>
                    </TablePane>
                    <ScrollBar before={1} size={206} />
                  </Sunken>
                </Splitter>
              </Client>
            </SubWindow>

            <SubWindow>
              <TitleBar>
                <Icon size={16}><PencilShape /></Icon>
                <Title>プリプロセッサー</Title>
                <Captions />
              </TitleBar>
              <PreBody>
                <Docks>
                  <DockTitle>
                    <span>オブジェクトブラウザー</span>
                    <button type="button" aria-label="閉じる"><CrossIcon /></button>
                  </DockTitle>
                  <TreeFrame>
                    <Tree>
                      {nodes.map((n, i) => (
                        <TreeRow key={n.text} $level={n.level}>
                          {n.open === undefined ? (
                            <Expander as="span" />
                          ) : (
                            <Expander type="button" aria-label="展開">
                              <Chevron dir={n.open ? "down" : "right"} color={n.open ? "#333" : "#999"} w={n.open ? 2 : 1.3} />
                            </Expander>
                          )}
                          <TreeCell $selected={n.icon === "blue"}>
                            <Check
                              type="checkbox"
                              checked={checks[i]}
                              onChange={() => setChecks(checks.map((c, k) => (k === i ? !c : c)))}
                            />
                            {n.icon === "folder" ? <FolderIcon /> : <PageIcon blue={n.icon === "blue"} />}
                            {n.text}
                          </TreeCell>
                        </TreeRow>
                      ))}
                    </Tree>
                    <ScrollBar before={44} size={44} />
                  </TreeFrame>
                  <DockTitle>
                    <span>属性ブラウザ</span>
                    <button type="button" aria-label="フロート"><FloatIcon /></button>
                    <button type="button" aria-label="閉じる"><CrossIcon /></button>
                  </DockTitle>
                  <Properties>
                    <GroupRow>
                      <Group>
                        <Legend>インデックス</Legend>
                        <Readout><span>I:</span><output>1</output></Readout>
                        <Readout><span>J:</span><output>5</output></Readout>
                      </Group>
                      <Group>
                        <Legend>座標</Legend>
                        <Readout><span>X:</span><output>-2.500000</output></Readout>
                        <Readout><span>Y:</span><output>0.000000</output></Readout>
                      </Group>
                    </GroupRow>
                    <Caption>属性:</Caption>
                    <PropFrame>
                      <PropTop>
                        <PropTable>
                          <colgroup><Col $w={16} /><Col $w={107} /><Col $w={106} /></colgroup>
                          <thead>
                            <tr><th /><th scope="col">属性名</th><th scope="col">値</th></tr>
                          </thead>
                          <tbody>
                            <tr><th scope="row">1</th><td>地形高 (m)</td><td>2.500000</td></tr>
                          </tbody>
                        </PropTable>
                        <ScrollBar before={0} size={20} />
                      </PropTop>
                      <ScrollBar before={1} size={95} horizontal />
                    </PropFrame>
                  </Properties>
                </Docks>
                <View>
                  <MeshView />
                </View>
              </PreBody>
            </SubWindow>
          </Workspace>
        </Body>

        <StatusBar>
          <StatusField>X: ------</StatusField>
          <StatusField>Y: ------</StatusField>
        </StatusBar>
      </Shell>
    </>
  );
}
